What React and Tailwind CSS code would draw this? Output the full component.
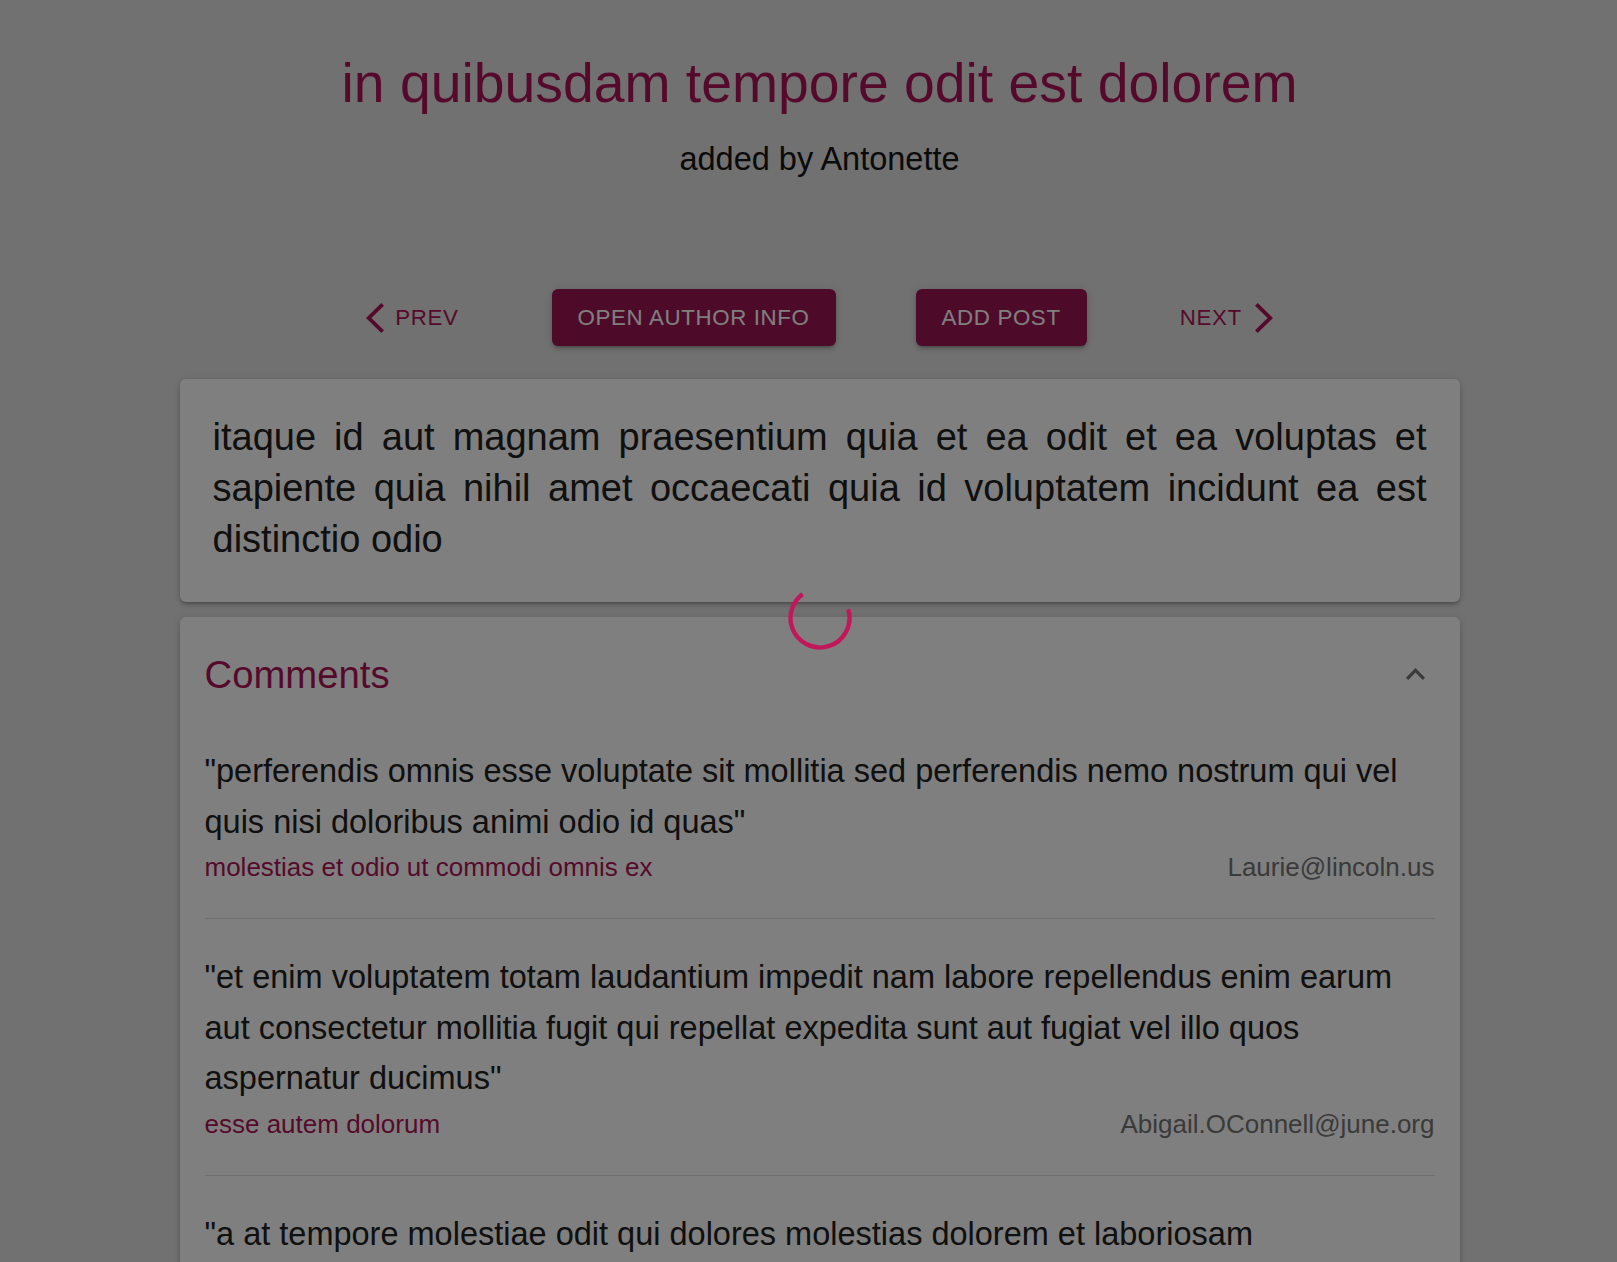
import React from 'react';

const PRIMARY = 'text-[#ad1457]';

const comments = [
  {
    body: 'perferendis omnis esse voluptate sit mollitia sed perferendis nemo nostrum qui vel quis nisi doloribus animi odio id quas',
    name: 'molestias et odio ut commodi omnis ex',
    email: 'Laurie@lincoln.us',
  },
  {
    body: 'et enim voluptatem totam laudantium impedit nam labore repellendus enim earum aut consectetur mollitia fugit qui repellat expedita sunt aut fugiat vel illo quos aspernatur ducimus',
    name: 'esse autem dolorum',
    email: 'Abigail.OConnell@june.org',
  },
  {
    body: 'a at tempore molestiae odit qui dolores molestias dolorem et laboriosam repudiandae expedita',
    name: 'maiores sed dolores similique labore et inventore et',
    email: 'Jayne_Kuhic@sydney.com',
  },
];

function ChevronLeft() {
  return (
    <svg width="18" height="30" viewBox="6 2 11.77 20" preserveAspectRatio="none" fill="currentColor">
      <path d="M17.77 3.77 16 2 6 12l10 10 1.77-1.77L9.54 12z" />
    </svg>
  );
}

function ChevronRight() {
  return (
    <svg width="18" height="30" viewBox="6.23 2 11.77 20" preserveAspectRatio="none" fill="currentColor">
      <path d="M6.23 20.23 8 22l10-10L8 2 6.23 3.77 14.46 12z" />
    </svg>
  );
}

function ExpandLess() {
  return (
    <svg width="19" height="12" viewBox="6 8 12 7.41" preserveAspectRatio="none" fill="currentColor">
      <path d="M12 8l-6 6 1.41 1.41L12 10.83l4.59 4.58L18 14z" />
    </svg>
  );
}

function Spinner() {
  return (
    <svg width="64" height="64" viewBox="0 0 64 64">
      <circle
        cx="32"
        cy="32"
        r="29.5"
        fill="none"
        stroke="#c2185b"
        strokeWidth="4.4"
        strokeDasharray="129 200"
        transform="rotate(-17 32 32)"
      />
    </svg>
  );
}

const cardShadow =
  'shadow-[0_3px_3px_-2px_rgba(0,0,0,0.2),0_3px_4px_0_rgba(0,0,0,0.14),0_1px_8px_0_rgba(0,0,0,0.12)]';

export default function App() {
  return (
    <div className="relative h-screen overflow-hidden bg-[#e2e2e2] font-['Liberation_Sans',Arial,sans-serif]">
      <div className="pl-[22px]">
        <div className="w-[1280px] mx-auto">
          {/* Header */}
          <h1 className={`pt-[50px] text-center text-[55.3px] leading-[66px] ${PRIMARY}`}>
            in quibusdam tempore odit est dolorem
          </h1>
          <p className="mt-[19px] text-center text-[32.5px] leading-[48px] text-[#141414]">added by Antonette</p>

          {/* Actions */}
          <div className="mt-[106px] flex items-center justify-center gap-[80px] h-[57px] text-[22.3px] tracking-[0.02857em]">
            <button className={`flex items-center px-[13px] leading-[38px] uppercase ${PRIMARY}`}>
              <ChevronLeft />
              <span className="ml-[11px]">Prev</span>
            </button>
            <button
              className={`h-[57px] px-[26px] rounded-[6px] bg-[#9c1452] text-white leading-[38px] uppercase ${cardShadow}`}
            >
              Open author info
            </button>
            <button
              className={`h-[57px] px-[26px] rounded-[6px] bg-[#9c1452] text-white leading-[38px] uppercase ${cardShadow}`}
            >
              Add post
            </button>
            <button className={`flex items-center px-[13px] leading-[38px] uppercase ${PRIMARY}`}>
              <span className="mr-[13px]">Next</span>
              <ChevronRight />
            </button>
          </div>

          {/* Post body */}
          <div
            className={`mt-[33px] rounded-[6px] bg-white px-[33px] pt-[33px] pb-[36px] text-[38px] leading-[51.2px] text-justify text-[#212121] ${cardShadow}`}
          >
            itaque id aut magnam praesentium quia et ea odit et ea voluptas et sapiente quia nihil amet occaecati quia id
            voluptatem incidunt ea est distinctio odio
          </div>

          {/* Comments accordion */}
          <div className={`mt-[15px] rounded-[6px] bg-white ${cardShadow}`}>
            <div className="flex items-center justify-between pl-[25px] pr-[35px] pt-[35px] pb-[16px]">
              <h2 className={`text-[38.3px] leading-[45.6px] ${PRIMARY}`}>Comments</h2>
              <span className="text-[#757575]">
                <ExpandLess />
              </span>
            </div>
            <div className="px-[25px]">
              {comments.map((c) => (
                <div key={c.email} className="border-b border-[#e0e0e0] pt-[33px] pb-[31px]">
                  <p className="text-[32.5px] leading-[50.5px] text-[#212121]">"{c.body}"</p>
                  <div className="mt-[1px] flex items-center justify-between text-[26px] leading-[39px]">
                    <span className={PRIMARY}>{c.name}</span>
                    <span className="text-[#757575]">{c.email}</span>
                  </div>
                </div>
              ))}
            </div>
          </div>
        </div>
      </div>

      {/* Loading backdrop */}
      <div className="fixed inset-0 bg-black/50">
        <div className="absolute left-[788px] top-[586px]">
          <Spinner />
        </div>
      </div>
    </div>
  );
}
